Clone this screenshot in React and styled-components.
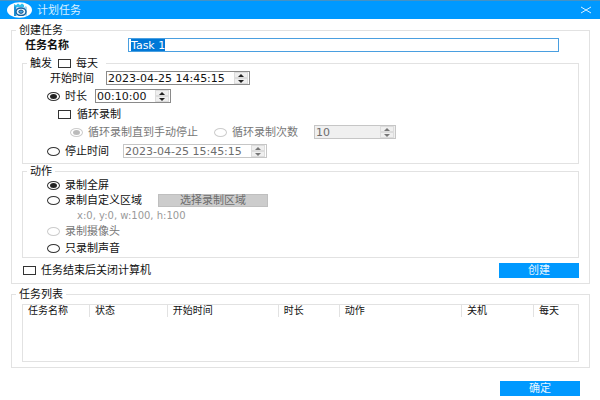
import React, { useEffect, useRef, useState } from "react";
import styled, { createGlobalStyle } from "styled-components";

const GlobalStyle = createGlobalStyle`
  * {
    box-sizing: border-box;
  }
  body {
    margin: 0;
    background: #fff;
    color: #111;
    font-family: "DejaVu Sans", "Noto Sans CJK SC", sans-serif;
    font-size: 11px;
    line-height: 13px;
  }
  input, button {
    font: inherit;
    color: inherit;
    margin: 0;
  }
`
const TitleBar = styled.header`
  display: flex;
  align-items: center;
  height: 19px;
  padding: 0 8px 0 7px;
  border-top: 1px solid #4692c4;
  background: #0099ff;
  color: #d9f0ff;
  h1 {
    flex-grow: 1;
    margin: 0 0 0 5px;
    font-size: 11px;
    font-weight: normal;
  }
  svg {
    display: block;
  }
`
const CloseButton = styled.button`
  padding: 0;
  border: 0;
  background: none;
`
const Content = styled.main`
  padding: 5px 10px 4px 11px;
`
const Group = styled.fieldset`
  min-width: 0;
  margin: 0;
  padding: 0 4px;
  border: 1px solid #e2e2e2;
  legend {
    display: flex;
    align-items: center;
    gap: 6px;
    height: 12px;
    padding: 0 3px;
  }
`
const GroupBody = styled.div`
  display: flex;
  flex-direction: column;
  padding: 0 6px;
`
const TriggerGroup = styled(Group)`
  margin-top: 3px;
  padding-bottom: 2px;
  legend {
    padding-right: 8px;
  }
`
const ActionGroup = styled(Group)`
  margin-top: 1px;
  padding-bottom: 1px;
`
const ListGroup = styled(Group)`
  margin-top: 4px;
  padding-bottom: 5px;
`
const NameRow = styled.div`
  display: flex;
  align-items: center;
  height: 18px;
  padding: 0 20px 0 3px;
  label {
    width: 103px;
    font-weight: bold;
  }
`
const NameInput = styled.input`
  flex: 1;
  min-width: 0;
  height: 14px;
  padding: 0 2px;
  border: 1px solid #4a9fe0;
  outline: none;
  background: #fff;
  &::selection {
    background: #0078d7;
    color: #fff;
  }
`
const Row = styled.div`
  display: flex;
  align-items: center;
  height: ${(p) => p.$height || 18}px;
  padding-left: ${(p) => p.$indent || 20}px;
  gap: ${(p) => p.$gap || 16}px;
`
const Choice = styled.label`
  display: inline-flex;
  align-items: center;
  gap: ${(p) => p.$gap || 5}px;
  white-space: nowrap;
  color: ${(p) => (p.$muted ? "#777" : "inherit")};
`
const Check = styled.input.attrs({ type: "checkbox" })`
  appearance: none;
  flex: none;
  width: 13px;
  height: 9px;
  border: 1px solid #333;
  background: #fff;
  &:checked {
    background: #333;
    box-shadow: inset 0 0 0 1px #fff;
  }
`
const Radio = styled.input.attrs({ type: "radio" })`
  appearance: none;
  display: grid;
  place-items: center;
  flex: none;
  width: 13px;
  height: 9px;
  border: 1px solid #333;
  border-radius: 50%;
  background: #fff;
  &:checked::before {
    content: "";
    width: 7px;
    height: 5px;
    border-radius: 50%;
    background: #222;
  }
  &:disabled {
    border-color: #ccc;
  }
  &:disabled:checked::before {
    background: #bbb;
  }
`
const SpinFrame = styled.div`
  display: flex;
  align-items: center;
  width: ${(p) => p.$width}px;
  height: 14px;
  padding-right: 1px;
  border: 1px solid ${(p) => (p.$disabled ? "#c6c6c6" : "#8a8a8a")};
  background: ${(p) => (p.$filled ? "#f0f0f0" : "#fff")};
  color: ${(p) => (p.$disabled ? "#6d6d6d" : "#111")};
  input {
    flex: 1;
    min-width: 0;
    height: 12px;
    padding: 0 0 0 1px;
    border: 0;
    outline: none;
    background: none;
  }
`
const SpinButtons = styled.div`
  display: flex;
  flex-direction: column;
  button {
    display: flex;
    align-items: center;
    justify-content: center;
    width: 14px;
    height: 6px;
    padding: 0;
    border: 1px solid #dcdcdc;
    background: #efefef;
  }
`
const PickButton = styled.button`
  width: 110px;
  height: 13px;
  padding: 0;
  border: 1px solid #bfbfbf;
  background: #ccc;
  color: #6d6d6d;
  line-height: 12px;
`
const Hint = styled.span`
  color: #999;
  font-size: 10px;
`
const CreateRow = styled.div`
  display: flex;
  align-items: center;
  justify-content: space-between;
  height: 25px;
  padding-left: 1px;
`
const PrimaryButton = styled.button`
  width: 80px;
  height: 15px;
  padding: 0;
  border: 0;
  background: #0099ff;
  color: #e6f5ff;
  line-height: 15px;
`
const TableBox = styled.div`
  min-height: 58px;
  margin-top: 4px;
  border: 1px solid #e2e2e2;
`
const TaskTable = styled.table`
  width: 100%;
  table-layout: fixed;
  border-collapse: collapse;
  th {
    height: 12px;
    padding: 0 0 0 5px;
    border-right: 1px solid #e2e2e2;
    font-size: 10px;
    font-weight: normal;
    line-height: 12px;
    text-align: left;
    white-space: nowrap;
  }
  th:last-child {
    border-right: 0;
  }
`
const Footer = styled.footer`
  display: flex;
  justify-content: flex-end;
  padding: 13px 10px 0 0;
`

const columns = [
  { name: "任务名称", width: "12%" },
  { name: "状态", width: "14%" },
  { name: "开始时间", width: "20%" },
  { name: "时长", width: "11%" },
  { name: "动作", width: "22%" },
  { name: "关机", width: "13%" },
  { name: "每天", width: "8%" },
]

const Logo = () => (
  <svg width="25" height="16" viewBox="0 0 25 16" aria-hidden="true">
    <ellipse cx="12.5" cy="8" rx="12.5" ry="7.8" fill="#fff" />
    <path d="M7 2l2 1.200L11 1.500l2 1.500 2-1.500 2 1.500v2H9v9H7z" fill="#2fc0ee" />
    <path d="M7 4.500h2.500V14H7z" fill="#1e93d6" />
    <path d="M9.500 5.500h7l2.500-1.500 1 1.500v8H9.500z" fill="#9bd6f5" />
    <ellipse cx="14" cy="9.700" rx="5" ry="3.700" fill="#eaf7fe" stroke="#17609f" strokeWidth="1.400" />
    <ellipse cx="14" cy="9.700" rx="2.200" ry="1.600" fill="#4aa9e2" stroke="#174f87" />
  </svg>
)

const SpinBox = ({ width, disabled, filled, ...rest }) => (
  <SpinFrame $width={width} $disabled={disabled} $filled={filled}>
    <input type="text" disabled={disabled} {...rest} />
    <SpinButtons>
      <button type="button" disabled={disabled} aria-label="增加">
        <svg width="6" height="3" viewBox="0 0 6 3"><path d="M0 3L3 0l3 3z" fill={disabled ? "#777" : "#222"} /></svg>
      </button>
      <button type="button" disabled={disabled} aria-label="减少">
        <svg width="6" height="3" viewBox="0 0 6 3"><path d="M0 0l3 3 3-3z" fill={disabled ? "#777" : "#222"} /></svg>
      </button>
    </SpinButtons>
  </SpinFrame>
)

const App = () => {
  const [mode, setMode] = useState("duration");
  const [action, setAction] = useState("full");
  const nameRef = useRef(null);

  useEffect(() => {
    nameRef.current.focus();
    nameRef.current.select();
  }, [])

  return (
    <>
      <GlobalStyle />
      <TitleBar>
        <Logo />
        <h1>计划任务</h1>
        <CloseButton type="button" aria-label="关闭">
          <svg width="12" height="8" viewBox="0 0 12 8">
            <path d="M1 1l10 6M11 1L1 7" stroke="#d9f0ff" fill="none" />
          </svg>
        </CloseButton>
      </TitleBar>
      <Content>
        <Group>
          <legend>创建任务</legend>
          <GroupBody>
            <NameRow>
              <label htmlFor="task-name">任务名称</label>
              <NameInput id="task-name" ref={nameRef} type="text" defaultValue="Task 1" />
            </NameRow>

            <TriggerGroup>
              <legend>
                触发
                <Choice $gap={5}><Check />每天</Choice>
              </legend>
              <Row $indent={23} $gap={12}>
                <label htmlFor="start-time">开始时间</label>
                <SpinBox id="start-time" width={144} defaultValue="2023-04-25 14:45:15" />
              </Row>
              <Row $gap={8}>
                <Choice>
                  <Radio name="mode" checked={mode === "duration"} onChange={() => setMode("duration")} />
                  时长
                </Choice>
                <SpinBox width={76} aria-label="时长" defaultValue="00:10:00" />
              </Row>
              <Row $indent={31}>
                <Choice $gap={6}><Check />循环录制</Choice>
              </Row>
              <Row $indent={43}>
                <Choice $muted>
                  <Radio name="loop" defaultChecked disabled />
                  循环录制直到手动停止
                </Choice>
                <Choice $muted>
                  <Radio name="loop" disabled />
                  循环录制次数
                </Choice>
                <SpinBox width={82} disabled filled aria-label="循环录制次数" defaultValue="10" />
              </Row>
              <Row $height={20} $gap={14}>
                <Choice>
                  <Radio name="mode" checked={mode === "stop"} onChange={() => setMode("stop")} />
                  停止时间
                </Choice>
                <SpinBox width={144} disabled aria-label="停止时间" defaultValue="2023-04-25 15:45:15" />
              </Row>
            </TriggerGroup>

            <ActionGroup>
              <legend>动作</legend>
              <Row $height={16}>
                <Choice>
                  <Radio name="action" checked={action === "full"} onChange={() => setAction("full")} />
                  录制全屏
                </Choice>
              </Row>
              <Row $height={15}>
                <Choice>
                  <Radio name="action" checked={action === "area"} onChange={() => setAction("area")} />
                  录制自定义区域
                </Choice>
                <PickButton type="button" disabled={action !== "area"}>选择录制区域</PickButton>
              </Row>
              <Row $height={15} $indent={50}>
                <Hint>x:0, y:0, w:100, h:100</Hint>
              </Row>
              <Row $height={17}>
                <Choice $muted>
                  <Radio name="action" disabled />
                  录制摄像头
                </Choice>
              </Row>
              <Row $height={16}>
                <Choice>
                  <Radio name="action" checked={action === "audio"} onChange={() => setAction("audio")} />
                  只录制声音
                </Choice>
              </Row>
            </ActionGroup>

            <CreateRow>
              <Choice><Check />任务结束后关闭计算机</Choice>
              <PrimaryButton type="button">创建</PrimaryButton>
            </CreateRow>
          </GroupBody>
        </Group>

        <ListGroup>
          <legend>任务列表</legend>
          <GroupBody>
            <TableBox>
              <TaskTable>
                <colgroup>
                  {columns.map((c) => <col key={c.name} width={c.width} />)}
                </colgroup>
                <thead>
                  <tr>
                    {columns.map((c) => <th key={c.name} scope="col">{c.name}</th>)}
                  </tr>
                </thead>
                <tbody />
              </TaskTable>
            </TableBox>
          </GroupBody>
        </ListGroup>

        <Footer>
          <PrimaryButton type="button">确定</PrimaryButton>
        </Footer>
      </Content>
    </>
  )
}

export default App;
